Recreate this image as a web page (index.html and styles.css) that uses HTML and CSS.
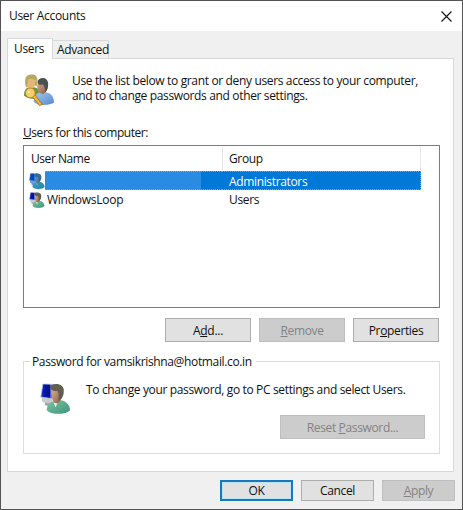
FILE: index.html
```html
<!DOCTYPE html>
<html lang="en">
<head>
<meta charset="utf-8">
<title>User Accounts</title>
<link rel="stylesheet" href="styles.css">
</head>
<body>
<svg class="defs" width="0" height="0" aria-hidden="true">
  <defs>
    <filter id="tint" color-interpolation-filters="sRGB"><feFlood flood-color="#0078d7" flood-opacity=".5" result="f"/><feComposite in="f" in2="SourceAlpha" operator="in" result="c"/><feMerge><feMergeNode in="SourceGraphic"/><feMergeNode in="c"/></feMerge></filter>
    <linearGradient id="screen" x1="0" y1="0" x2="1" y2="0"><stop offset="0" stop-color="#2450dd"/><stop offset=".2" stop-color="#0818b0"/><stop offset=".6" stop-color="#050b8c"/><stop offset=".68" stop-color="#5b83ea"/><stop offset="1" stop-color="#2c50d8"/></linearGradient>
    <linearGradient id="skin" x1="0" y1="0" x2="1" y2="1"><stop offset="0" stop-color="#e2b596"/><stop offset="1" stop-color="#855747"/></linearGradient>
    <linearGradient id="green" x1="0" y1="0" x2="1" y2="1"><stop offset="0" stop-color="#7fc4a2"/><stop offset="1" stop-color="#3d9478"/></linearGradient>
    <linearGradient id="blue" x1="0" y1="0" x2="1" y2="1"><stop offset="0" stop-color="#a5cbed"/><stop offset="1" stop-color="#5589ce"/></linearGradient>
    <symbol id="user" viewBox="0 0 32 32">
      <path d="M2 15l12 1-2 5-9-1-1-2z" fill="#c8cbd0"/>
      <path d="M5 20l7 1 2 4-9-2z" fill="#a3a7aa"/>
      <path d="M3 1l13 .5v15L.8 14.500z" fill="url(#screen)" stroke="#b9c4db" stroke-width=".7"/>
      <path d="M7 28c0-6 4-9 9-10 8-2 15 3 15 10-4 5-20 5-24 0z" fill="url(#green)"/>
      <path d="M14 20l2 5 2-4z" fill="#f2f5ee"/>
      <path d="M12 6c3-4 11-3 11 4 0 6-3 11-6 11-4 0-6-8-5-15z" fill="url(#skin)"/>
      <path d="M10 4c3-5 16-4 14.500 5 0 4-2 8-5 9-1-4 1-7-2-10-3 1-5 0-7.500-4z" fill="#625e50"/>
    </symbol>
    <symbol id="people" viewBox="0 0 32 32">
      <path d="M1 22c0-7 3-9 8-9 7 0 9 4 9 10-5 3-12 3-17-1z" fill="#6b9645"/>
      <ellipse cx="8" cy="8" rx="5" ry="7" fill="#e4b77c"/>
      <path d="M2.500 11C1 1 5 0 10 0c5 0 6 6 4 12l-2-1 1-5C9 4 6 4 5 6l-1 8z" fill="#b5a95a"/>
      <path d="M11 28c0-7 4-10 10-10 7 0 11 4 11 11-4 3-17 4-21-1z" fill="url(#blue)"/>
      <ellipse cx="20" cy="12.500" rx="5.500" ry="7.500" fill="url(#skin)"/>
      <path d="M15 8c1-6 11-6 11 2 0 4-1 6-3 8 0-4-1-7-3-8-2 1-4 1-5-2z" fill="#4b5052"/>
      <path d="M8 21l9 11 3-1-9-12z" fill="#edb43b" stroke="#a86a13" stroke-width=".8"/>
      <circle cx="7.500" cy="19" r="5" fill="#f7ce65" stroke="#bd8629" stroke-width="1"/>
      <circle cx="6" cy="18" r="1" fill="#fff6d0"/>
    </symbol>
  </defs>
</svg>
<main class="window">
  <header class="titlebar"><h1><span class="t title">User Accounts</span></h1>
    <svg class="close" viewBox="0 0 11 11"><path d="M.5 .5l10 10M10.500.5l-10 10" fill="none" stroke="#111" stroke-width="1.1"/></svg>
  </header>
  <nav class="tabs"><div class="tab active"><span class="t">Users</span></div><div class="tab"><span class="t">Advanced</span></div></nav>
  <section class="page">
    <div class="intro"><svg class="people"><use href="#people"/></svg>
      <p><span class="t">Use the list below to grant or deny users access to your computer,<br>and to change passwords and other settings.</span></p></div>
    <div class="label"><span class="t tight"><u>U</u>sers for this computer:</span></div>
    <div class="list">
      <div class="row head"><div class="name"><span class="t tight">User Name</span></div><div class="group"><span class="t">Group</span></div></div>
      <div class="row selected"><svg class="mini"><use href="#user"/></svg><div class="name"></div><div class="group"><span class="t">Administrators</span></div></div>
      <div class="row"><svg class="mini"><use href="#user"/></svg><div class="name"><span class="t loose">WindowsLoop</span></div><div class="group"><span class="t">Users</span></div></div>
    </div>
    <div class="actions"><button><span class="t loose">A<u>d</u>d...</span></button><button disabled><span class="t"><u>R</u>emove</span></button><button><span class="t">Pr<u>o</u>perties</span></button></div>
    <section class="password"><h2><span class="t">Password for vamsikrishna@hotmail.co.in</span></h2>
      <div class="change"><svg class="user"><use href="#user"/></svg><span class="t">To change your password, go to PC settings and select Users.</span></div>
      <button class="reset" disabled><span class="t">Reset <u>P</u>assword...</span></button>
    </section>
  </section>
  <footer><button class="ok"><span class="t">OK</span></button><button><span class="t">Cancel</span></button><button disabled><span class="t"><u>A</u>pply</span></button></footer>
</main>
</body>
</html>
```
FILE: styles.css
```css
* { box-sizing: border-box; }
body { margin: 0; font: 12px/15px "Open Sans", "Noto Sans", sans-serif; color: #111; }
.defs { display: block; height: 0; }
.window { width: 463px; height: 510px; border: 1px solid #555255; background: #f0f0f0; overflow: hidden; }
.t { letter-spacing: -.35px; white-space: nowrap; }
.t.loose { letter-spacing: -.25px; }
.t.title { letter-spacing: -.3px; }
.t.tight { letter-spacing: -.44px; }
u { text-decoration-thickness: 1px; text-underline-offset: 1px; }
h1, h2, p { margin: 0; font-size: 12px; font-weight: 400; }
.titlebar { height: 30px; padding: 0 10px 0 8px; display: flex; align-items: center; justify-content: space-between; background: #fff; }
.titlebar h1 { padding-bottom: 1px; }
.close { width: 11px; height: 11px; }
.tabs { height: 27px; padding: 7px 0 0 6px; display: flex; align-items: flex-end; }
.tab { width: 56px; height: 18px; padding: 1px 0 0 4px; border: 1px solid #d9d9d9; border-bottom: 0; border-left: 0; }
.tab.active { width: 46px; height: 21px; padding: 2px 0 0 6px; border-left: 1px solid #d9d9d9; background: #fff; margin-bottom: -1px; z-index: 1; }
.page { width: 447px; height: 414px; margin-left: 6px; padding: 0 14px 0 15px; border: 1px solid #d9d9d9; background: #fff; }
.intro { height: 66px; padding-top: 15px; display: flex; gap: 18px; }
.intro p { margin-top: -1px; }
.people { width: 31px; height: 32px; }
.label { height: 20px; }
.list { height: 163px; width: 417px; border: 1px solid #7a7c80; padding-left: 5px; }
.row { height: 19px; display: flex; width: 392px; align-items: center; }
.row .name { width: 177px; padding-left: 2px; }
.row .group { flex: 1; padding-left: 7px; }
.head { height: 25px; }
.head .name { width: 194px; }
.head .name, .head .group { height: 23px; padding-top: 4px; border-right: 1px solid #e5e5e5; }
.head .group { padding-left: 6px; }
.mini { width: 16px; height: 16px; flex: none; }
.selected .name, .selected .group { height: 19px; padding-top: 2px; background: #0078d7; border: 1px dotted #c99554; border-width: 1px 0; color: #fff; }
.selected .name { background: linear-gradient(90deg, #298be1 156px, #0078d7 156px); }
.selected .group { border-right-width: 1px; }
.selected .mini { filter: url(#tint); }
.actions { display: flex; gap: 8px; padding-top: 10px; justify-content: flex-end; height: 44px; }
button { width: 86px; height: 24px; padding: 0; border: 1px solid #adadad; background: #e1e1e1; font: inherit; color: #111; }
button:disabled { background: #ccc; border-color: #bfbfbf; color: #838383; }
.password { width: 417px; height: 93px; margin-top: 9px; border: 1px solid #dcdcdc; }
h2 { height: 15px; width: 226px; margin: -8px 0 0 6px; padding-left: 2px; background: #fff; line-height: 15px; }
.change { display: flex; gap: 15px; padding: 13px 0 0 16px; height: 46px; }
.user { width: 31px; height: 33px; }
.reset { display: block; width: 145px; margin-left: 256px; }
footer { display: flex; justify-content: flex-end; gap: 8px; padding: 8px 7px 0 0; }
footer button { width: 73px; height: 21px; }
.ok { border: 2px solid #1778be; box-shadow: inset 0 0 0 1px #bce3f5; }
```
